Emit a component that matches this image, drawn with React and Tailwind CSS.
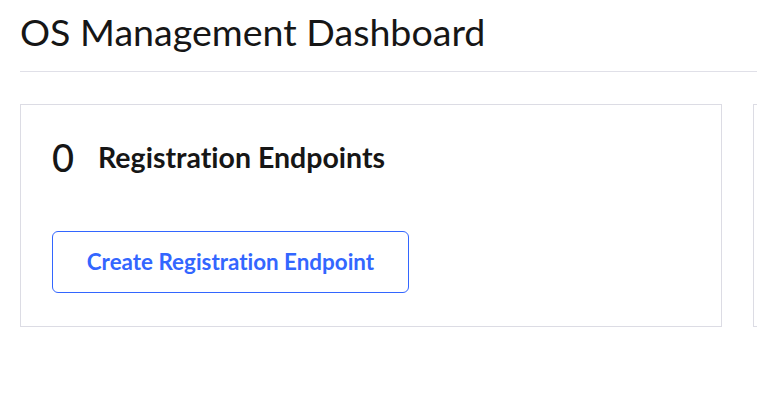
export default function App() {
  return (
    <div className="w-[757px] h-[404px] overflow-hidden bg-white text-[#161616] [font-variant-ligatures:none]" style={{ fontFamily: "Lato, 'Noto Sans', sans-serif" }}>
      <div className="pl-5">
        <h1 className="text-[37.6px] leading-[46px] pt-[9px] pb-[16px] font-normal border-b border-[#e0e0e8]">OS Management Dashboard</h1>
        <div className="flex gap-[31px] pt-8">
          <div className="shrink-0 w-[702px] h-[223px] border border-[#dcdce4] pl-[31px] pt-[32px]">
            <div className="flex items-center h-[40px]">
              <span className="text-[38px] leading-none font-medium w-[46px]">0</span>
              <span className="text-[28.5px] leading-none font-bold">Registration Endpoints</span>
            </div>
            <button className="block mt-[54px] w-[357px] h-[62px] border border-[#3366ff] rounded-[6px] text-[#3366ff] text-[22.4px] leading-none font-bold">Create Registration Endpoint</button>
          </div>
          <div className="shrink-0 w-[400px] h-[223px] border border-[#dcdce4]"></div>
        </div>
      </div>
    </div>
  );
}
